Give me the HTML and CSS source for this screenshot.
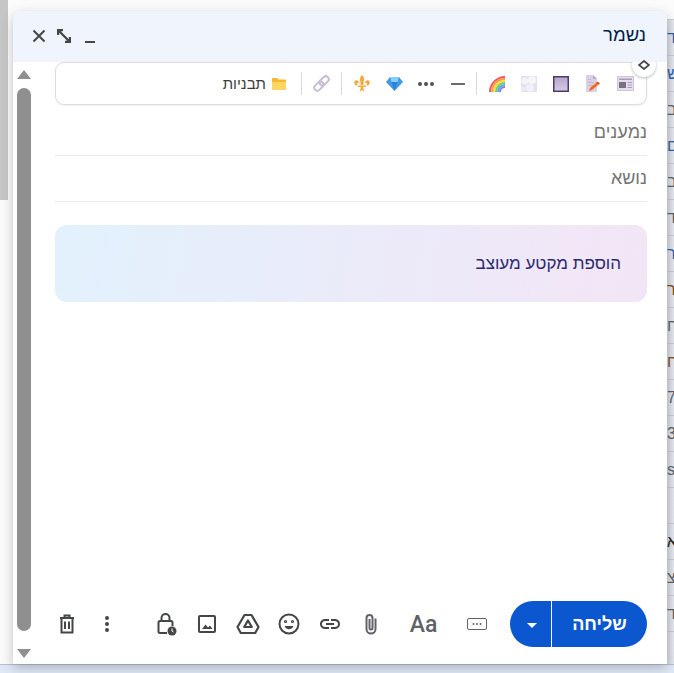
FILE: index.html
```html
<!DOCTYPE html>
<html lang="he" dir="rtl">
<head>
  <meta charset="UTF-8">
  <title>הודעה חדשה</title>
  <link rel="stylesheet" href="styles.css">
</head>
<body>

  <div class="side-strip"></div>

  <div class="inbox" dir="ltr">
    <div class="row"><span class="c-blue">ד</span></div>
    <div class="row"><span class="c-blue">ש</span></div>
    <div class="row"><span>ב</span></div>
    <div class="row"><span class="c-blue">ם</span></div>
    <div class="row"><span>ב</span></div>
    <div class="row"><span>ד</span></div>
    <div class="row"><span class="c-blue">ר</span></div>
    <div class="row"><span class="c-brown">ר</span></div>
    <div class="row"><span>ח</span></div>
    <div class="row"><span class="c-brown">ח</span></div>
    <div class="row"><span>7</span></div>
    <div class="row"><span>3</span></div>
    <div class="row"><span>s</span></div>
    <div class="row"></div>
    <div class="row"><span class="c-dark">א</span></div>
    <div class="row"><span>צ</span></div>
    <div class="row"><span>ד</span></div>
    <div class="row"></div>
  </div>

  <div class="page-footer"></div>

  <div class="compose">
    <div class="head">
      <span class="head-title">נשמר</span>
      <div class="head-btns" dir="ltr">
        <svg class="head-btn" width="14" height="14" viewBox="0 0 14 14"><path d="M1.500 1.500l11 11M12.500 1.500l-11 11" stroke="#444746" stroke-width="2" fill="none"/></svg>
        <svg class="head-btn" width="14" height="14" viewBox="0 0 14 14"><path d="M1 6V1h5M13 8v5H8M1.500 1.500l11 11" stroke="#444746" stroke-width="2.300" fill="none"/></svg>
        <span class="head-min"></span>
      </div>
    </div>

    <div class="compose-body">
      <div class="scrollbar">
        <span class="arrow-up"></span>
        <span class="thumb"></span>
        <span class="arrow-down"></span>
      </div>

      <div class="content">
        <div class="tpl-bar">
          <span class="tpl-icon">
            <svg width="17" height="15" viewBox="0 0 17 15"><rect x=".5" y=".5" width="16" height="14" fill="#e6deee" stroke="#cfc4dc"/><rect x="2" y="2.500" width="13" height="1.500" fill="#a99bb8"/><rect x="2" y="6" width="7" height="6" fill="#77727f"/><path d="M10.500 6.500H15M10.500 9H15M10.500 11.500H15" stroke="#a99bb8"/></svg>
          </span>
          <span class="tpl-icon">
            <svg width="16" height="17" viewBox="0 0 16 17"><path d="M1 0h7l4 4v13H1z" fill="#dcd0e4"/><path d="M8 0l4 4H8z" fill="#b9a9c8"/><path d="M3 10.500h6M3 7.500h6M3 4.500h3" stroke="#c3b5d0"/><path d="M4 16l1-3 6-5 2 2-6 5z" fill="#f26a21"/><path d="M11 8l1.500-1.500 2.500 2L13 10z" fill="#e8441c"/></svg>
          </span>
          <span class="tpl-icon">
            <svg width="16" height="16" viewBox="0 0 16 16"><defs><linearGradient id="sq" x1="0" y1="0" x2="0" y2="1"><stop offset="0" stop-color="#b5a4cc"/><stop offset="1" stop-color="#d6cbe2"/></linearGradient></defs><rect x=".75" y=".75" width="14.500" height="14.500" fill="url(#sq)" stroke="#4b3a6b" stroke-width="1.500"/></svg>
          </span>
          <span class="tpl-icon">
            <svg width="16" height="16" viewBox="0 0 16 16"><rect width="16" height="16" fill="#e4e0ee"/><circle cx="4" cy="5" r="3.500" fill="#f5f3fa"/><circle cx="11" cy="4" r="4" fill="#f7f6fb"/><circle cx="9" cy="12" r="4" fill="#f2f0f8"/><circle cx="2" cy="13" r="2.500" fill="#eeebf5"/></svg>
          </span>
          <span class="tpl-icon">
            <svg width="17" height="16" viewBox="0 0 17 16" fill="none"><path d="M1 16A15 15 0 0 1 16 1" stroke="#f0556d" stroke-width="2"/><path d="M3 16A13 13 0 0 1 16 3" stroke="#f9a03c" stroke-width="2"/><path d="M5 16A11 11 0 0 1 16 5" stroke="#fbd83f" stroke-width="2"/><path d="M7 16A9 9 0 0 1 16 7" stroke="#6fcf5f" stroke-width="2"/><path d="M9 16A7 7 0 0 1 16 9" stroke="#4fb4ee" stroke-width="2"/><path d="M11 16A5 5 0 0 1 16 11" stroke="#a06fd8" stroke-width="2"/></svg>
          </span>
          <span class="tpl-sep sep-1"></span>
          <span class="tpl-icon"><span class="dash"></span></span>
          <span class="tpl-icon">
            <svg width="18" height="6" viewBox="0 0 18 6"><circle cx="3" cy="3" r="2" fill="#50505a"/><circle cx="9" cy="3" r="2" fill="#50505a"/><circle cx="15" cy="3" r="2" fill="#50505a"/></svg>
          </span>
          <span class="tpl-icon">
            <svg width="17" height="14" viewBox="0 0 17 14"><path d="M4 0h9l4 5-8.500 9L0 5z" fill="#3f9be8"/><path d="M4 0h9l-1.500 5h-6z" fill="#86d0f8"/><path d="M5.500 5h6l-3 9z" fill="#2f7fdc"/></svg>
          </span>
          <span class="tpl-icon">
            <svg width="16" height="17" viewBox="0 0 16 17" fill="#f5a93a"><path d="M8 0c2 2 3 4 1.500 7v3h-3V7C5 4 6 2 8 0z"/><path d="M6 9C5 6 2 4 .5 6.500 -.5 9 2 11.500 4 10c-1 0-1.500-1.500-.5-2 1-.5 2 .5 2.500 1z"/><path d="M10 9c1-3 4-5 5.500-2.500 1 2.500-1.500 5-3.500 3.500 1 0 1.500-1.500.5-2-1-.5-2 .5-2.500 1z"/><rect x="4" y="10.500" width="8" height="1.500"/><path d="M7 12h2l1.500 5L8 15l-2.500 2z"/></svg>
          </span>
          <span class="tpl-sep sep-2"></span>
          <span class="tpl-icon">
            <svg width="17" height="17" viewBox="0 0 17 17" fill="none" stroke="#c9bed6" stroke-width="2"><g transform="rotate(-45 8.500 8.500)"><rect x="-.5" y="5.500" width="10.500" height="6" rx="3"/><rect x="7" y="5.500" width="10.500" height="6" rx="3"/></g></svg>
          </span>
          <span class="tpl-sep sep-3"></span>
          <span class="tpl-name">
            <svg width="14" height="12" viewBox="0 0 14 12"><path d="M0 1a1 1 0 0 1 1-1h4l1.500 1.500H13a1 1 0 0 1 1 1V11a1 1 0 0 1-1 1H1a1 1 0 0 1-1-1z" fill="#f7b733"/><path d="M0 4h14v7a1 1 0 0 1-1 1H1a1 1 0 0 1-1-1z" fill="#fdd663"/></svg>
            תבניות
          </span>
        </div>

        <div class="field field-first">נמענים</div>
        <div class="field">נושא</div>

        <div class="banner">הוספת מקטע מעוצב</div>

        <div class="actions">
          <div class="send">
            <span class="send-main">שליחה</span>
            <span class="send-more"><span class="caret"></span></span>
          </div>

          <span class="tool">
            <svg width="20" height="12" viewBox="0 0 20 12" fill="none"><rect x=".5" y=".5" width="19" height="11" rx="1.500" stroke="#5f6368"/><circle cx="6.500" cy="6" r="1" fill="#5f6368"/><circle cx="10" cy="6" r="1" fill="#5f6368"/><circle cx="13.500" cy="6" r="1" fill="#5f6368"/></svg>
          </span>
          <span class="tool tool-text" dir="ltr">Aa</span>
          <span class="tool">
            <svg width="24" height="24" viewBox="0 0 24 24" fill="none" stroke="#5f6368" stroke-width="2"><path d="M16.500 6.500V17a4.500 4.500 0 0 1-9 0V6a3 3 0 0 1 6 0v10a1.500 1.500 0 0 1-3 0V7"/></svg>
          </span>
          <span class="tool">
            <svg width="24" height="24" viewBox="0 0 24 24" fill="#444746"><path d="M3.900 12c0-1.710 1.390-3.100 3.100-3.100h4V7H7c-2.760 0-5 2.240-5 5s2.240 5 5 5h4v-1.900H7c-1.710 0-3.100-1.390-3.100-3.100zM8 13h8v-2H8v2zm9-6h-4v1.900h4c1.710 0 3.100 1.390 3.100 3.100s-1.390 3.100-3.100 3.100h-4V17h4c2.760 0 5-2.240 5-5s-2.240-5-5-5z"/></svg>
          </span>
          <span class="tool">
            <svg width="24" height="24" viewBox="0 0 24 24" fill="none" stroke="#444746" stroke-width="2"><circle cx="12" cy="12" r="9.500"/><circle cx="8.500" cy="9.500" r=".6"/><circle cx="15.500" cy="9.500" r=".6"/><path d="M7.500 14c1 2.300 2.600 3.200 4.500 3.200s3.500-.9 4.500-3.200z" fill="#444746" stroke="none"/></svg>
          </span>
          <span class="tool">
            <svg width="24" height="24" viewBox="0 0 24 24" fill="none" stroke="#444746" stroke-width="2.200" stroke-linejoin="round"><path d="M8.500 3h7L22.500 15l-3.300 6H4.800l-3.300-6z"/><path d="M12 8.500l3.800 6.500H8.200z"/></svg>
          </span>
          <span class="tool">
            <svg width="24" height="24" viewBox="0 0 24 24"><rect x="4" y="4" width="16" height="16" rx="1" fill="none" stroke="#444746" stroke-width="2"/><path d="M7 17l3.500-4.500 2.500 3 2-2 2.500 3.500z" fill="#444746"/></svg>
          </span>
          <span class="tool">
            <svg width="24" height="24" viewBox="0 0 24 24" fill="none" stroke="#444746" stroke-width="2"><path d="M7.500 9V6a4 4 0 0 1 8 0v3"/><path d="M13 21H6a1.500 1.500 0 0 1-1.500-1.500v-9A1.500 1.500 0 0 1 6 9h11a1.500 1.500 0 0 1 1.500 1.500V14"/><circle cx="18" cy="19" r="4.500" fill="#444746" stroke="none"/><path d="M18 16.500V19l1.500 1" stroke="#fff" stroke-width="1"/></svg>
          </span>
          <span class="actions-gap"></span>
          <span class="tool">
            <svg width="6" height="18" viewBox="0 0 6 18" fill="#444746"><circle cx="3" cy="3" r="2"/><circle cx="3" cy="9" r="2"/><circle cx="3" cy="15" r="2"/></svg>
          </span>
          <span class="tool tool-last">
            <svg width="24" height="24" viewBox="0 0 24 24" fill="none" stroke="#444746" stroke-width="2"><path d="M5 6h14M9.500 6V3.500h5V6M6.500 6v14.500h11V6"/><path d="M10 9.500v7.500M14 9.500v7.500"/></svg>
          </span>
        </div>
      </div>
    </div>

    <span class="code-toggle">
      <svg width="12" height="10" viewBox="0 0 12 10" fill="none"><path d="M6 1L11 5 6 9 1 5z" stroke="#444746" stroke-width="1.800"/></svg>
    </span>
  </div>

</body>
</html>
```

FILE: styles.css
```css
* { box-sizing: border-box; }

html, body {
  height: 100%;
}

body {
  margin: 0;
  overflow: hidden;
  position: relative;
  background: #fbfbfc;
  font-family: "Liberation Sans", "Noto Sans", sans-serif;
  color: #1f1f1f;
}

/* whatever is behind the compose window */
.side-strip {
  position: absolute;
  top: 0;
  left: 0;
  width: 8px;
  height: 200px;
  background: #c6c6c6;
}

.inbox {
  position: absolute;
  top: 19px;
  right: 0;
  width: 7px;
  overflow: hidden;
  background: linear-gradient(90deg, #d3d6dd, #e6e9ef);
}

.row {
  height: 36px;
  border-top: 1px solid #c9ccd3;
  font-size: 16px;
  line-height: 35px;
  color: #5a5f6a;
  white-space: nowrap;
}

.c-blue { color: #2a5fa8; }
.c-brown { color: #7a4a20; }
.c-dark { color: #202124; }

.page-footer {
  position: absolute;
  left: 0;
  right: 0;
  bottom: 0;
  height: 9px;
  border-top: 1px solid #b9bec8;
  background: #dfe8f7;
}

/* compose window */
.compose {
  position: absolute;
  top: 11px;
  left: 13px;
  width: 654px;
  height: 653px;
  display: flex;
  flex-direction: column;
  background: #fff;
  border-radius: 9px 9px 0 0;
  box-shadow: 0 4px 12px rgba(60, 64, 67, .3);
}

.head {
  flex: 0 0 51px;
  display: flex;
  justify-content: space-between;
  padding: 14px 21px 0 19px;
  background: #f0f4fc;
  border-radius: 9px 9px 0 0;
}

.head-title {
  font-size: 18.5px;
  line-height: 20px;
  color: #041e49;
}

.head-btns {
  display: flex;
  align-items: flex-start;
  gap: 11px;
  height: 18px;
  padding-top: 4px;
}

.head-btn {
  display: block;
}

.head-min {
  width: 10px;
  height: 2px;
  margin-top: 12px;
  margin-left: 3px;
  background: #444746;
}

.compose-body {
  flex: 1;
  display: flex;
  flex-direction: row-reverse;
  min-height: 0;
}

.scrollbar {
  flex: 0 0 42px;
  display: flex;
  flex-direction: column;
  align-items: flex-end;
  padding: 8px 0 6px 4px;
}

.arrow-up {
  width: 0;
  height: 0;
  border-left: 7px solid transparent;
  border-right: 7px solid transparent;
  border-bottom: 9px solid #8f8f8f;
}

.thumb {
  flex: 1;
  width: 14px;
  margin: 9px 0 18px;
  background: #8f8f8f;
  border-radius: 7px;
}

.arrow-down {
  width: 0;
  height: 0;
  border-left: 7px solid transparent;
  border-right: 7px solid transparent;
  border-top: 9px solid #8f8f8f;
}

.content {
  flex: 1;
  min-width: 0;
  display: flex;
  flex-direction: column;
  margin-right: 20px;
}

/* templates bar */
.tpl-bar {
  flex: 0 0 43px;
  display: flex;
  align-items: center;
  padding: 0 5px;
  background: #fff;
  border: 1px solid #dcdde3;
  border-radius: 9px;
  box-shadow: 0 1px 2px rgba(60, 64, 67, .08);
}

.tpl-icon {
  flex: 0 0 32px;
  display: flex;
  justify-content: center;
  align-items: center;
}

.tpl-sep {
  width: 1px;
  height: 23px;
  background: #d9d9de;
}

.sep-1 { margin: 0 4px 0 2px; }
.sep-2 { margin: 0 4px; }
.sep-3 { margin: 0 3px; }

.dash {
  width: 14px;
  height: 2px;
  background: #6a6a72;
}

.tpl-name {
  display: flex;
  align-items: center;
  gap: 6px;
  margin-right: 12px;
  font-size: 15px;
  color: #3c3c3c;
}

/* recipients, subject */
.field {
  flex: 0 0 46px;
  display: flex;
  align-items: center;
  border-bottom: 1px solid #e8eaed;
  font-size: 18px;
  color: #757575;
}

.field-first {
  margin-top: 5px;
}

.banner {
  flex: 0 0 77px;
  display: flex;
  align-items: center;
  margin-top: 23px;
  padding-right: 26px;
  border-radius: 12px;
  background: linear-gradient(100deg, #e2f1fd, #f3e5f6);
  font-size: 17px;
  color: #2b2a70;
}

/* bottom row */
.actions {
  margin-top: auto;
  margin-bottom: 17px;
  display: flex;
  align-items: center;
}

.send {
  flex: 0 0 137px;
  display: flex;
  height: 46px;
  margin-left: 13px;
  border-radius: 23px;
  overflow: hidden;
  background: #0b57d0;
}

.send-main {
  flex: 1;
  display: flex;
  align-items: center;
  justify-content: center;
  border-left: 1px solid #fff;
  font-size: 18px;
  font-weight: bold;
  color: #fff;
}

.send-more {
  flex: 0 0 41px;
  display: flex;
  align-items: center;
  justify-content: center;
  padding-left: 2px;
}

.caret {
  width: 0;
  height: 0;
  margin-top: 2px;
  border-left: 5px solid transparent;
  border-right: 5px solid transparent;
  border-top: 5px solid #fff;
}

.tool {
  flex: 0 0 41px;
  display: flex;
  align-items: center;
  justify-content: center;
}

.tool-text {
  flex: 0 0 65px;
  font-family: Roboto, "Liberation Sans", sans-serif;
  font-size: 23px;
  font-weight: 500;
  color: #5f6368;
}

.tool-last {
  flex: 0 0 24px;
  margin-right: 7px;
}

.actions-gap {
  flex: 0 0 18px;
}

.code-toggle {
  position: absolute;
  top: 42px;
  right: 11px;
  width: 24px;
  height: 24px;
  display: flex;
  align-items: center;
  justify-content: center;
}

.code-toggle::before {
  content: "";
  position: absolute;
  inset: 0;
  background: #fff;
  border-radius: 50%;
  box-shadow: 0 1px 3px rgba(60, 64, 67, .35);
  clip-path: inset(9px -4px -4px -4px);
}

.code-toggle svg {
  position: relative;
}
```
